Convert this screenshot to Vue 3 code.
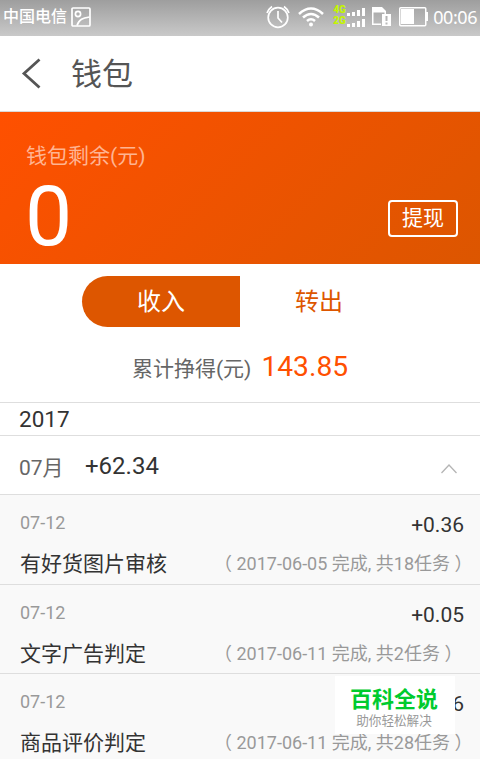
<script setup>
const entries = [
  { date: '07-12', name: '有好货图片审核', amount: '+0.36', detail: '（ 2017-06-05 完成, 共18任务 ）' },
  { date: '07-12', name: '文字广告判定', amount: '+0.05', detail: '（ 2017-06-11 完成, 共2任务 ）' },
  { date: '07-12', name: '商品评价判定', amount: '6', detail: '（ 2017-06-11 完成, 共28任务 ）' },
]
</script>

<template>
  <main class="screen">
    <div class="status">
      <span class="carrier">中国电信</span>
      <svg class="picture" width="20" height="20" viewBox="0 0 20 20" fill="none" stroke="#fff" stroke-width="1.7">
        <rect x="1" y="1" width="18" height="18" rx="1" />
        <circle cx="7" cy="7" r="2.6" />
        <path d="M6 18.5C8 12 12 11 18.5 10" />
      </svg>
      <div class="status-icons">
        <svg width="26" height="24" viewBox="0 0 26 24" fill="none" stroke="#fff" stroke-width="1.7">
          <circle cx="13" cy="12.500" r="9.8" />
          <path d="M13 6v7l4 4.500M2 8Q3.500 4 7 1.5M19 1.5Q22.500 4 24 8" />
        </svg>
        <svg class="wifi" width="26" height="20" viewBox="0 0 26 20" fill="none" stroke="#fff" stroke-width="2.6">
          <path d="M1 7Q13-4 25 7M5 10.500Q13 3.500 21 10.500M9 14Q13 10.500 17 14" />
          <circle cx="13" cy="17.500" r="2" fill="#fff" stroke="none" />
        </svg>
        <div class="net"><span>4G</span><span>2G</span></div>
        <svg class="bars" width="18" height="20" viewBox="0 0 18 20" fill="#fff">
          <path d="M0 6h3v3H0zM5 5h3v4H5zM10 3h3v6h-3zM15 1h3v8h-3zM0 17h3v3H0zM5 16h3v4H5zM10 14h3v6h-3zM15 12h3v8h-3z" />
        </svg>
        <svg class="sim" width="19" height="19" viewBox="0 0 19 19">
          <path d="M0 0h10l4 4v3h-1.500V5.500h-11v11H9V18H0z" fill="#fff" fill-rule="evenodd" />
          <path d="M10 7h9v12h-9zM13.500 9v5h2V9zM13.500 15.500v2h2v-2z" fill="#fff" fill-rule="evenodd" />
        </svg>
        <svg class="battery" width="29" height="20" viewBox="0 0 29 20">
          <rect x=".75" y=".75" width="26" height="18" rx="1" fill="none" stroke="#fff" stroke-width="1.500" />
          <path d="M2 2h13v15H2zM27 5h2v9h-2z" fill="#fff" />
        </svg>
        <span class="clock">00:06</span>
      </div>
    </div>

    <header class="header">
      <svg width="20" height="32" viewBox="0 0 20 32" fill="none" stroke="#555" stroke-width="2.800">
        <path d="M18.500 1.500L3 15.500l15.500 14" />
      </svg>
      <h1>钱包</h1>
    </header>

    <section class="balance">
      <div>
        <p class="balance-label">钱包剩余(元)</p>
        <p class="balance-value">0</p>
      </div>
      <button class="withdraw">提现</button>
    </section>

    <nav class="tabs">
      <button class="tab active">收入</button>
      <button class="tab">转出</button>
    </nav>
    <p class="total"><span>累计挣得(元)</span><strong>143.85</strong></p>

    <div class="year">2017</div>
    <div class="month">
      <span class="month-name">07月</span>
      <span class="month-sum">+62.34</span>
      <svg width="18" height="12" viewBox="0 0 18 12" fill="none" stroke="#b5b5b5" stroke-width="1.300">
        <path d="M1.500 10L9 2l7.500 8" />
      </svg>
    </div>
    <ul class="entries">
      <li v-for="entry in entries" :key="entry.name">
        <div class="line top"><span class="date">{{ entry.date }}</span><span class="amount">{{ entry.amount }}</span></div>
        <div class="line bottom"><span class="name">{{ entry.name }}</span><span class="detail">{{ entry.detail }}</span></div>
      </li>
    </ul>

    <aside class="badge">
      <b>百科全说</b>
      <span>助你轻松解决</span>
    </aside>
  </main>
</template>

<style>
body { margin: 0; background: #fff; overflow: hidden; }
</style>

<style scoped>
* { box-sizing: border-box; margin: 0; padding: 0; }
.screen { position: relative; width: 480px; height: 759px; overflow: hidden; font-family: Roboto, "Noto Sans CJK SC", sans-serif; background: #fff; }
button { border: 0; background: none; font-family: inherit; }
svg { display: block; flex: none; }
.status { display: flex; height: 36px; padding-left: 3px; color: #fff; background: linear-gradient(#9e9e9e, #c9c9c9); }
.carrier { width: 68px; font-size: 16px; line-height: 33px; font-weight: 500; white-space: nowrap; }
.picture { margin-top: 7px; }
.status-icons { display: flex; flex: 1; justify-content: flex-end; padding-right: 3px; }
.status-icons > svg { margin-top: 5px; }
.status-icons .wifi { margin: 7px 0 0 7px; }
.net { display: flex; flex-direction: column; width: 14px; margin: 4px 0 0 9px; font-size: 10px; line-height: 11px; font-weight: 900; color: #c4f500; }
.status-icons .bars { margin: 7px 0 0; }
.status-icons .sim { margin: 7px 0 0 7px; }
.status-icons .battery { margin: 7px 0 0 8px; }
.clock { margin-left: 5px; font: 18px/34px "Noto Sans", sans-serif; letter-spacing: -.45px; }
.header { display: flex; align-items: center; height: 76px; padding-left: 21px; border-bottom: 1px solid #dcd8d5; }
.header h1 { margin-left: 30px; padding-top: 2px; font-size: 31px; line-height: 74px; font-weight: 400; color: #555; }
.balance { display: flex; justify-content: space-between; height: 152px; padding: 30px 22px 0 26px; color: #fff; background: linear-gradient(135deg, #ff5000, #dc5600); }
.balance-label { font-size: 21px; line-height: 28px; color: #ffb492; }
.balance-value { padding-top: 2px; margin-left: -1px; font-size: 84px; line-height: 90px; }
.withdraw { width: 70px; height: 37px; margin-top: 58px; border: 2px solid #fff; border-radius: 4px; font-size: 21px; line-height: 33px; color: #fff; }
.tabs { display: flex; justify-content: center; height: 63px; padding-top: 11.500px; }
.tab { width: 158px; height: 51px; padding-top: 1px; font-size: 24px; line-height: 50px; color: #dd5600; }
.tab.active { border-radius: 26px 0 0 26px; color: #fff; background: #dd5600; }
.total { display: flex; justify-content: center; align-items: baseline; height: 75px; line-height: 79px; font-size: 21px; color: #666; }
.total strong { margin-left: 10px; font-size: 28.200px; font-weight: 400; color: #ff5000; }
.year { height: 34px; padding-left: 19px; border-top: 1px solid #dedede; border-bottom: 1px solid #dedede; font-size: 22.500px; line-height: 33px; color: #333; }
.month { display: flex; align-items: center; height: 59px; padding: 2px 22px 0 19px; border-bottom: 1px solid #dedede; color: #333; }
.month-name { width: 66px; padding-bottom: 1px; font-size: 21px; color: #666; }
.month-sum { flex: 1; font-size: 24px; }
.month svg { margin-top: 5px; }
.entries { list-style: none; background: #f9f9f9; }
.entries li { height: 89.500px; padding: 14px 16px 0 20px; border-bottom: 1px solid #dedede; }
.line { display: flex; justify-content: space-between; }
.top { height: 38px; line-height: 28px; }
.date { font-size: 18px; color: #999; }
.amount { padding-top: 2px; font-size: 21px; color: #333; }
.bottom { line-height: 34px; }
.name { flex: none; width: 194px; font-size: 21px; color: #333; white-space: nowrap; }
.detail { flex: none; font-size: 18px; color: #999; white-space: nowrap; }
.bottom { justify-content: flex-start; }
.badge { position: absolute; left: 335px; top: 676px; display: flex; flex-direction: column; align-items: center; width: 120px; height: 58px; padding: 9px 2px 0 0; background: #fff; }
.badge b { font-size: 22px; line-height: 29px; font-weight: 700; color: #00cb2e; }
.badge span { font-size: 12.600px; line-height: 14px; color: #999; }
</style>
